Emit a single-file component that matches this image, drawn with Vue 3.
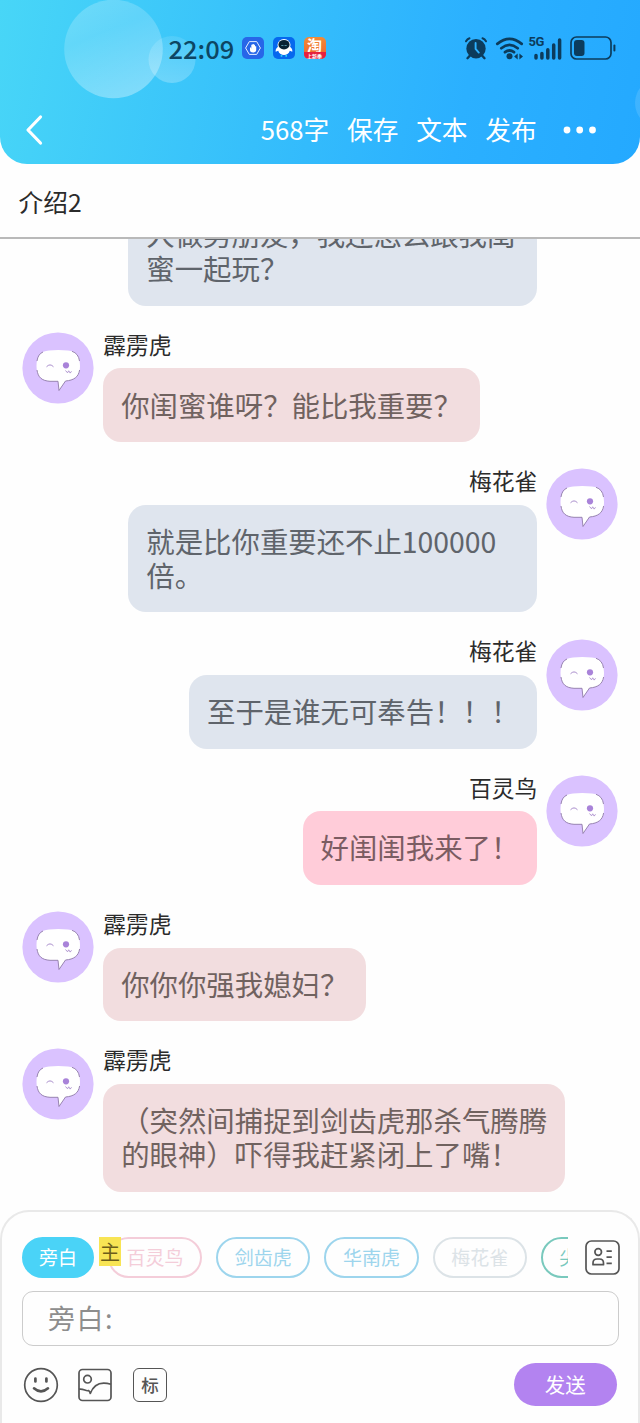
<script setup>
const messages = [
  { id: 1, side: 'right', name: '梅花雀', tone: 'blue', lines: ['人做男朋友，我还怎么跟我闺', '蜜一起玩？'] },
  { id: 2, side: 'left', name: '霹雳虎', tone: 'rose', lines: ['你闺蜜谁呀？能比我重要？'] },
  { id: 3, side: 'right', name: '梅花雀', tone: 'blue', lines: ['就是比你重要还不止100000', '倍。'] },
  { id: 4, side: 'right', name: '梅花雀', tone: 'blue', lines: ['至于是谁无可奉告！！！'] },
  { id: 5, side: 'right', name: '百灵鸟', tone: 'pink', lines: ['好闺闺我来了！'] },
  { id: 6, side: 'left', name: '霹雳虎', tone: 'rose', lines: ['你你你强我媳妇？'] },
  { id: 7, side: 'left', name: '霹雳虎', tone: 'rose', lines: ['（突然间捕捉到剑齿虎那杀气腾腾', '的眼神）吓得我赶紧闭上了嘴！'] },
]
const roles = [
  { name: '百灵鸟', cls: 'c-pink', main: true },
  { name: '剑齿虎', cls: 'c-blue' },
  { name: '华南虎', cls: 'c-blue' },
  { name: '梅花雀', cls: 'c-grey' },
  { name: '尖尾雀', cls: 'c-teal' },
]
</script>

<template>
  <div class="screen">
    <header class="top">
      <svg class="bubbles" width="640" height="163" viewBox="0 0 640 163">
        <defs>
          <linearGradient id="orb" x1="0.2" y1="0" x2="0.6" y2="1">
            <stop offset="0" stop-color="#fff" stop-opacity=".22" />
            <stop offset=".35" stop-color="#fff" stop-opacity=".17" />
            <stop offset="1" stop-color="#fff" stop-opacity=".34" />
          </linearGradient>
          <linearGradient id="orb2" x1="0.5" y1="0" x2="0.4" y2="1">
            <stop offset="0" stop-color="#fff" stop-opacity=".1" />
            <stop offset="1" stop-color="#fff" stop-opacity=".25" />
          </linearGradient>
        </defs>
        <circle cx="172" cy="59.500" r="23.500" fill="url(#orb2)" />
        <circle cx="113.500" cy="49" r="49.300" fill="url(#orb)" />
        <circle cx="660" cy="103" r="25" fill="#fff" opacity=".12" />
      </svg>

      <div class="status">
        <span class="time">22:09</span>
        <svg class="app" width="22" height="22" viewBox="0 0 22 22">
          <rect width="22" height="22" rx="5" fill="#2766e8" />
          <path d="M7.300 4.600h7.400L18.400 11l-3.700 6.400H7.300L3.600 11z" fill="none" stroke="#e5edff" stroke-width="1" />
          <path d="M8 10.400v2.800c0 3 6 3 6.200 0V9.300h-1.200V7.700h-1.200V7h-1.300v.7H9.300v4L8.600 10.200z" fill="#fff" />
        </svg>
        <svg class="app" width="22" height="22" viewBox="0 0 22 22">
          <rect width="22" height="22" rx="5" fill="#0668ee" />
          <path d="M5.500 9.500C3.500 10.500 2.300 12.500 2.700 14.700l2.500-1C7 19.500 15 19.500 16.800 13.700l2.500 1C19.700 12.500 18.500 10.500 16.500 9.500z" fill="#fff" />
          <ellipse cx="11" cy="8" rx="6.500" ry="6" fill="#fff" />
          <ellipse cx="11" cy="7.700" rx="5.600" ry="4.800" fill="#082233" />
          <path d="M8.600 8.800q.8-1.600 1.600 0M11.800 8.800q.8-1.600 1.600 0" fill="none" stroke="#8de9ff" stroke-width=".8" />
          <path d="M8.500 18v1.800M13.200 18v1.800" stroke="#28d7f2" stroke-width="1.600" />
        </svg>
        <div class="app taobao"><span class="tao">淘</span><span class="tao-strip">上新季</span></div>

        <div class="signals">
          <svg width="24" height="24" viewBox="0 0 24 24" class="alarm">
            <g fill="none" stroke="#0c3c5c" stroke-width="2.400" stroke-linecap="round">
              <path d="M2 5.300Q3.300 3 5.500 2.300M18.500 2.300Q20.800 3 22 5.300" stroke-width="2" />
              <path d="M6 19.500l-2.500 2.700M18 19.500l2.500 2.700" />
            </g>
            <circle cx="12" cy="12.700" r="9.700" fill="#0c3c5c" />
            <path d="M11.600 7v6l3.200 3.600" fill="none" stroke="#2eb1ff" stroke-width="1.900" stroke-linecap="round" />
          </svg>
          <svg width="30" height="24" viewBox="0 0 30 24" class="wifi">
            <g fill="none" stroke="#0c3c5c" stroke-width="2.700" stroke-linecap="round">
              <path d="M2.300 7.900Q14.500-2.200 26.700 7.900" />
              <path d="M6.300 12.200Q14.500 5.500 22.700 12.200" />
              <path d="M10 16.200Q14.500 12.800 19 16.200" />
            </g>
            <circle cx="14.500" cy="20.300" r="3" fill="#0c3c5c" />
            <path d="M22.700 17.400v6l-3.600-3zM24.400 17.400v6l3.600-3z" fill="#0c3c5c" />
          </svg>
          <div class="cell">
            <span class="five-g">5G</span>
            <svg width="28" height="22" viewBox="0 0 28 22">
              <path d="M2 17.500V20M7.900 15.400V20M13.800 11.800V20M19.700 7V20M25.600 2V20" stroke="#0c3c5c" stroke-width="3.500" stroke-linecap="round" />
            </svg>
          </div>
          <svg width="46" height="24" viewBox="0 0 46 24" class="battery">
            <rect x="1" y="1" width="40" height="22" rx="5.500" fill="none" stroke="#0c3c5c" stroke-width="1.700" />
            <rect x="4" y="4" width="10.500" height="16" rx="3" fill="#0c3c5c" />
            <path d="M44.400 9.500v5" stroke="#0c3c5c" stroke-width="2" stroke-linecap="round" />
          </svg>
        </div>
      </div>

      <nav class="actions">
        <svg class="back" width="20" height="32" viewBox="0 0 20 32">
          <path d="M17.500 3L5 16 17.500 29" fill="none" stroke="#fff" stroke-width="3.200" stroke-linecap="round" stroke-linejoin="round" />
        </svg>
        <span>568字</span><span>保存</span><span>文本</span><span>发布</span>
        <svg class="more" width="34" height="8" viewBox="0 0 34 8">
          <g fill="#fff"><circle cx="4" cy="4" r="3.400" /><circle cx="16.700" cy="4" r="3.400" /><circle cx="29.500" cy="4" r="3.400" /></g>
        </svg>
      </nav>
    </header>

    <div class="title">介绍2</div>

    <main class="chat">
      <div v-for="m in messages" :key="m.id" class="row" :class="m.side">
        <svg class="avatar" width="72" height="72" viewBox="0 0 72 72">
          <circle cx="36" cy="36" r="35.600" fill="#dac2ff" />
          <path d="M27 18.500Q36 17.700 46 18.500C54.500 19 58 24.500 58 34 58 43.500 54 48 43.500 49L37 58.500 36 49.300H28C18.500 48.500 14.500 43.500 14.500 34 14.500 24.500 18.500 19 27 18.500z" fill="#fff" />
          <path d="M15 38C16 45.500 20 48.800 28 49.300H36L37 58.500 43.500 49C52 48.300 56.500 45 57.600 38M50 19.300Q56.500 21.500 57.500 29M15 29Q16 22 21 20" fill="none" stroke="#8e7ba7" stroke-width=".9" />
          <path d="M24.500 34.800Q28 31 31.500 34.800" fill="none" stroke="#a98dcc" stroke-width="1" />
          <circle cx="44" cy="33.300" r="3.100" fill="#a983d9" />
          <path d="M43.500 38.500l2 2.300 1.200-2 1.500 2.300 1.300-1.800" fill="none" stroke="#a98dcc" stroke-width=".9" />
        </svg>
        <div class="content">
          <div class="name">{{ m.name }}</div>
          <div class="bubble" :class="[m.tone, { multi: m.lines.length > 1 }]">
            <div v-for="l in m.lines" :key="l" class="line">{{ l }}</div>
          </div>
        </div>
      </div>
    </main>

    <footer class="composer">
      <div class="roles">
        <div class="chips">
          <span class="chip active">旁白</span>
          <span v-for="r in roles" :key="r.name" class="chip" :class="r.cls">
            <i v-if="r.main" class="mark">主</i>{{ r.name }}
          </span>
        </div>
        <svg class="contacts" width="35" height="35" viewBox="0 0 35 35">
          <g fill="none" stroke="#555" stroke-width="1.700">
            <rect x="1" y="1" width="33" height="33" rx="5.500" />
            <circle cx="13.200" cy="12" r="3.300" />
            <path d="M8 24.700V23q0-4 4-4h2.500q4 0 4 4v1.700z" stroke-linejoin="round" />
            <path d="M21.500 11.200h5.300M21.500 17.200h5.300M21.500 23.300h5.300" />
          </g>
        </svg>
      </div>
      <div class="input">旁白:</div>
      <div class="tools">
        <svg width="36" height="36" viewBox="0 0 36 36">
          <g fill="none" stroke="#555" stroke-linecap="round">
            <circle cx="18" cy="18" r="16.300" stroke-width="1.700" />
            <path d="M12.400 11.500v3M23.400 11.500v3" stroke-width="2.700" />
            <path d="M11 21.300Q18 27.500 25 21.300" stroke-width="2.600" />
          </g>
        </svg>
        <svg width="36" height="36" viewBox="0 0 36 36" class="pic">
          <g fill="none" stroke="#555" stroke-width="1.700" stroke-linejoin="round">
            <rect x="2" y="2.500" width="32" height="31" rx="3.500" />
            <circle cx="10.500" cy="12.200" r="3.800" />
            <path d="M2 22.200C7 21.500 8.500 24.500 11.500 23.600Q13 24.500 13.300 26.500 18.500 12.500 34 17.300" />
          </g>
        </svg>
        <div class="tag">标</div>
        <div class="send">发送</div>
      </div>
    </footer>
  </div>
</template>

<style>
body { margin: 0; background: #fff; }
</style>

<style scoped>
.screen {
  width: 640px;
  height: 1423px;
  display: flex;
  flex-direction: column;
  overflow: hidden;
  background: #fefefe;
  font-family: "Noto Sans CJK SC", sans-serif;
  color: #2b2b2b;
}
.top {
  position: relative;
  box-sizing: border-box;
  height: 163.500px;
  flex: none;
  padding-top: 32px;
  overflow: hidden;
  border-radius: 0 0 27px 27px;
  background: linear-gradient(102deg, #48d6f7 0%, #36bffb 42%, #2bb0ff 72%, #24a9ff 100%);
}
.bubbles { position: absolute; left: 0; top: 0; }
.status { position: relative; display: flex; align-items: center; height: 31px; padding: 0 24.500px 0 168.500px; }
.time { width: 73.500px; font-size: 25.500px; font-weight: 500; line-height: 30px; color: #0d4663; }
.app { flex: none; margin-right: 8.800px; }
.taobao {
  width: 22px; height: 22px; border-radius: 5px; overflow: hidden; color: #fff;
  background: linear-gradient(#f28b35, #ee612e);
  display: flex; flex-direction: column; align-items: center;
}
.tao { font-size: 15px; line-height: 15px; font-weight: 700; }
.tao-strip { width: 22px; height: 7px; background: #e7203e; font-size: 5px; line-height: 7px; text-align: center; font-weight: 700; }
.signals { display: flex; align-items: center; margin-left: auto; }
.alarm { margin-right: 7px; }
.wifi { margin-right: 5px; }
.cell { position: relative; width: 32px; height: 24px; display: flex; align-items: flex-end; justify-content: flex-end; margin-right: 8px; }
.five-g { position: absolute; left: -1px; top: -1px; font: 700 13px/14px "Roboto", sans-serif; letter-spacing: -0.500px; color: #0c3c5c; }
.actions { position: relative; display: flex; align-items: center; margin-top: 47px; height: 40px; padding: 0 43px 0 23px; font-size: 25.700px; line-height: 36px; color: #fff; }
.actions span { margin-right: 17.800px; padding-bottom: 2px; white-space: nowrap; }
.back { margin-right: auto; }
.more { margin-left: 8.500px; }
.title { flex: none; box-sizing: border-box; height: 75.500px; padding: 0 18.500px; border-bottom: 2px solid #b9b9b9; font-size: 24.700px; line-height: 74px; }
.chat { flex: 1; min-height: 0; display: flex; flex-direction: column; justify-content: flex-end; gap: 27px; overflow: hidden; padding: 0 22.500px 18.500px; }
.row { flex: none; display: flex; align-items: flex-start; gap: 8.700px; }
.right { flex-direction: row-reverse; }
.avatar { flex: none; margin: -0.700px 0 0 -0.500px; }
.left .avatar { margin-right: 0.500px; }
.content { display: flex; flex-direction: column; align-items: flex-start; }
.right .content { align-items: flex-end; }
.name { height: 35.600px; font-size: 22.800px; line-height: 23px; }
.bubble { box-sizing: border-box; padding: 19.300px 18px 20.700px; border-radius: 18px; font-size: 28.400px; line-height: 33.800px; white-space: nowrap; }
.right .multi { width: 409px; }
.blue { background: #dfe5ee; color: #5f646b; }
.rose { background: #f2dddf; color: #70625f; }
.pink { background: #ffccd9; color: #7b5c62; }
.composer { flex: none; box-sizing: border-box; height: 213px; border: 2px solid #e9e9e9; border-bottom: 0; border-radius: 29px 29px 0 0; padding: 25px 19px 0 20px; background: #fefefe; }
.roles { display: flex; align-items: center; height: 41px; }
.chips { display: flex; flex: none; gap: 14px; width: 546px; overflow: hidden; }
.chip { position: relative; flex: none; box-sizing: border-box; width: 94.200px; height: 41px; border: 2px solid; border-radius: 21px; font-size: 19px; line-height: 36px; text-align: center; }
.active { width: 72px; background: #4ad3f7; border-color: #4ad3f7; color: #fff; }
.c-pink { color: #f4cdd9; }
.c-blue { color: #9dd5ed; }
.c-grey { color: #dce3e7; }
.c-teal { color: #79c9bd; }
.mark { position: absolute; left: -11px; top: -2px; width: 22px; height: 29px; background: #f8e454; color: #6c5d1a; font-size: 20px; font-style: normal; line-height: 29px; }
.contacts { flex: none; margin-left: 17px; }
.input { box-sizing: border-box; width: 596.500px; height: 55px; margin-top: 13px; padding-left: 25px; border: 1.500px solid #ccc; border-radius: 11px; font-size: 27px; letter-spacing: 1.500px; line-height: 52px; color: #8d8d8d; }
.tools { display: flex; align-items: center; height: 43px; margin-top: 17px; padding-left: 1px; }
.pic { margin-left: 18px; }
.tag { box-sizing: border-box; width: 34px; height: 34px; margin-left: 20px; border: 1.700px solid #555; border-radius: 6px; font-size: 17.500px; font-weight: 500; line-height: 31px; text-align: center; color: #555; }
.send { width: 102.500px; height: 43px; margin-left: auto; margin-right: 2.500px; border-radius: 22px; background: #b383f0; color: #fff; font-size: 20.500px; line-height: 43px; text-align: center; }
</style>
